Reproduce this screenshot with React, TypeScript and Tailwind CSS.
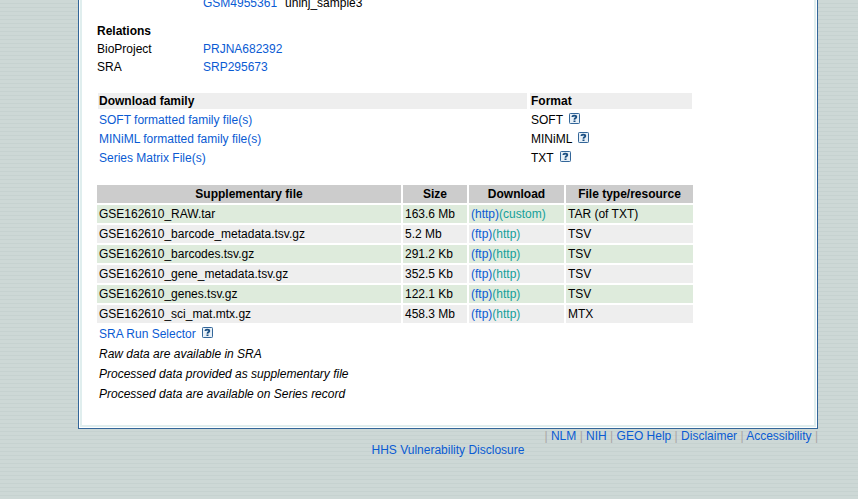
import React from "react";

type Download = { label: string; tone: "blue" | "teal" };
type SupplementaryFile = { name: string; size: string; downloads: Download[]; type: string };

const ftpAndHttp: Download[] = [
  { label: "(ftp)", tone: "blue" },
  { label: "(http)", tone: "teal" },
];

const files: SupplementaryFile[] = [
  {
    name: "GSE162610_RAW.tar",
    size: "163.6 Mb",
    downloads: [
      { label: "(http)", tone: "blue" },
      { label: "(custom)", tone: "teal" },
    ],
    type: "TAR (of TXT)",
  },
  { name: "GSE162610_barcode_metadata.tsv.gz", size: "5.2 Mb", downloads: ftpAndHttp, type: "TSV" },
  { name: "GSE162610_barcodes.tsv.gz", size: "291.2 Kb", downloads: ftpAndHttp, type: "TSV" },
  { name: "GSE162610_gene_metadata.tsv.gz", size: "352.5 Kb", downloads: ftpAndHttp, type: "TSV" },
  { name: "GSE162610_genes.tsv.gz", size: "122.1 Kb", downloads: ftpAndHttp, type: "TSV" },
  { name: "GSE162610_sci_mat.mtx.gz", size: "458.3 Mb", downloads: ftpAndHttp, type: "MTX" },
];

const families = [
  { name: "SOFT formatted family file(s)", format: "SOFT" },
  { name: "MINiML formatted family file(s)", format: "MINiML" },
  { name: "Series Matrix File(s)", format: "TXT" },
];

const notes = [
  "Raw data are available in SRA",
  "Processed data provided as supplementary file",
  "Processed data are available on Series record",
];

const footerLinks = ["NLM", "NIH", "GEO Help", "Disclaimer", "Accessibility"];

function Link({ children }: { children: React.ReactNode }) {
  return (
    <a href="#" className="text-[#0a5bd3] hover:underline">
      {children}
    </a>
  );
}

function HelpLink({ topic }: { topic: string }) {
  return (
    <a href="#" aria-label={`Help: ${topic}`} className="ml-1.5 inline-block h-[11px] w-[11px] align-baseline">
      <svg viewBox="0 0 11 11" className="block h-[11px] w-[11px]" aria-hidden="true">
        <rect x="0.5" y="0.5" width="10" height="10" rx="0.8" fill="#e8f0f7" stroke="#336699" />
        <path d="M3.5 4V3.4Q3.9 2.6 5.4 2.6Q7.3 2.6 7.3 3.9Q7.3 4.7 6.4 5.1Q5.5 5.5 5.5 6.7" fill="none" stroke="#1b4f82" strokeWidth="1.8" />
        <rect x="4.5" y="7.5" width="2" height="1.5" fill="#1b4f82" />
      </svg>
    </a>
  );
}

export default function App() {
  return (
    <div className="min-h-screen overflow-hidden bg-[repeating-linear-gradient(to_bottom,#cdd8d6_0px,#cdd8d6_3px,#c6d2d0_3px,#c6d2d0_4px)] pr-10 pl-[78px] font-['Liberation_Sans',Arial,sans-serif] text-xs text-black">
      <main className="border border-t-0 border-[#336699] bg-white px-px pb-px">
        <div className="border-2 border-t-0 border-[#e0eeee] px-[13px] pb-5">
          <div className="-mt-1.5 grid grid-cols-[106px_1fr] pl-0.5 leading-[18px]">
            <div className="col-start-2 mb-2.5 flex gap-2">
              <Link>GSM4955361</Link>
              <span>uninj_sample3</span>
            </div>
            <h2 className="col-span-2 font-bold">Relations</h2>
            <span>BioProject</span>
            <span>
              <Link>PRJNA682392</Link>
            </span>
            <span>SRA</span>
            <span>
              <Link>SRP295673</Link>
            </span>
          </div>

          <table className="mt-3.5 w-[600px] table-fixed border-separate border-spacing-[3px] text-left leading-4">
            <colgroup>
              <col className="w-[429px]" />
              <col />
            </colgroup>
            <thead>
              <tr>
                <th className="bg-[#eeeeee] p-0 pl-px">Download family</th>
                <th className="bg-[#eeeeee] p-0 pl-px">Format</th>
              </tr>
            </thead>
            <tbody>
              {families.map((family) => (
                <tr key={family.name}>
                  <td className="p-0 pl-px">
                    <Link>{family.name}</Link>
                  </td>
                  <td className="p-0 pl-px">
                    {family.format}
                    <HelpLink topic={family.format} />
                  </td>
                </tr>
              ))}
            </tbody>
          </table>

          <table className="mt-3.5 w-[600px] table-fixed border-separate border-spacing-0.5 leading-[18px]">
            <colgroup>
              <col className="w-[304px]" />
              <col className="w-16" />
              <col className="w-[95px]" />
              <col />
            </colgroup>
            <thead>
              <tr>
                {["Supplementary file", "Size", "Download", "File type/resource"].map((title) => (
                  <th key={title} className="bg-[#cccccc] p-0">
                    {title}
                  </th>
                ))}
              </tr>
            </thead>
            <tbody>
              {files.map((file) => (
                <tr key={file.name} className="group">
                  <td className="bg-[#deebdc] p-0 pl-0.5 group-even:bg-[#eeeeee]">{file.name}</td>
                  <td className="bg-[#deebdc] p-0 pl-0.5 group-even:bg-[#eeeeee]">{file.size}</td>
                  <td className="bg-[#deebdc] p-0 pl-0.5 group-even:bg-[#eeeeee]">
                    {file.downloads.map((d) => (
                      <a key={d.label} href="#" className={d.tone === "blue" ? "text-[#0a5bd3]" : "text-[#14a09a]"}>
                        {d.label}
                      </a>
                    ))}
                  </td>
                  <td className="bg-[#deebdc] p-0 pl-0.5 group-even:bg-[#eeeeee]">{file.type}</td>
                </tr>
              ))}
              <tr>
                <td colSpan={4} className="p-0 pl-0.5">
                  <Link>SRA Run Selector</Link>
                  <HelpLink topic="SRA Run Selector" />
                </td>
              </tr>
              {notes.map((note) => (
                <tr key={note}>
                  <td colSpan={4} className="p-0 pl-0.5 italic">
                    {note}
                  </td>
                </tr>
              ))}
            </tbody>
          </table>
        </div>
      </main>

      <footer className="leading-[14px]">
        <nav className="text-right text-[#aaa5a5]">
          |
          {footerLinks.map((label) => (
            <React.Fragment key={label}>
              {" "}
              <Link>{label}</Link> |
            </React.Fragment>
          ))}
        </nav>
        <p className="text-center">
          <Link>HHS Vulnerability Disclosure</Link>
        </p>
      </footer>
    </div>
  );
}
